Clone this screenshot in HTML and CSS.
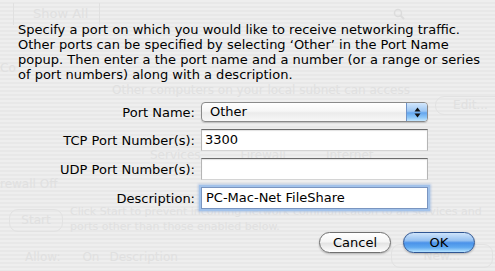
FILE: index.html
```html
<!DOCTYPE html>
<html>
<head>
<meta charset="utf-8">
<link rel="stylesheet" href="styles.css">
</head>
<body>
<div class="screen">
  <div class="ghost" aria-hidden="true">
    <div class="g-toolbar">
      <span class="g-sep"></span>
      <span class="g-showall">Show All</span>
      <span class="g-sep"></span>
      <span class="g-search">
        <svg width="12" height="12" viewBox="0 0 12 12"><circle cx="5" cy="5" r="3.5" fill="none" stroke="#dcdcdc" stroke-width="1.5"/><path d="M7.5 7.5 L11 11" stroke="#dcdcdc" stroke-width="2"/></svg>
      </span>
    </div>
    <div class="g-name">Co</div>
    <div class="g-other">
      <span class="g-other-text">Other computers on your local subnet can access</span>
      <span class="g-btn g-edit">Edit...</span>
    </div>
    <div class="g-tabs"><span>Services</span><span>Firewall</span><span>Internet</span></div>
    <div class="g-off">rewall Off</div>
    <div class="g-start">
      <span class="g-btn g-startbtn">Start</span>
      <span class="g-start-text">Click Start to prevent incoming network communication to all services and<br>ports other than those enabled below.</span>
    </div>
    <div class="g-allow">
      <span class="g-allow-l">Allow:</span>
      <span class="g-on">On</span>
      <span class="g-desc">Description</span>
      <span class="g-btn g-new">New...</span>
    </div>
  </div>

  <div class="sheet">
    <p class="msg"><span>Specify a port on which you would like to receive networking traffic.</span><span>Other ports can be specified by selecting ‘Other’ in the Port Name</span><span>popup. Then enter a the port name and a number (or a range or series</span><span>of port numbers) along with a description.</span></p>

    <div class="form">
      <label class="lbl">Port Name:</label>
      <div class="popup">
        <span class="popup-val">Other</span>
        <span class="popup-arrows">
          <svg width="7" height="11" viewBox="0 0 7 11"><path d="M3.5 0.5 L6.5 4.5 L0.5 4.5 Z" fill="#111"/><path d="M0.5 6.5 L6.5 6.5 L3.5 10.5 Z" fill="#111"/></svg>
        </span>
      </div>

      <label class="lbl">TCP Port Number(s):</label>
      <div class="field">3300</div>

      <label class="lbl">UDP Port Number(s):</label>
      <div class="field"></div>

      <label class="lbl">Description:</label>
      <div class="field focus">PC-Mac-Net FileShare</div>
    </div>

    <div class="buttons">
      <button class="btn cancel">Cancel</button>
      <button class="btn ok">OK</button>
    </div>
  </div>
</div>
</body>
</html>
```

FILE: styles.css
```css
html, body {
  margin: 0;
  padding: 0;
}

.screen {
  width: 495px;
  height: 271px;
  overflow: hidden;
  display: grid;
  grid-template-columns: 495px;
  grid-template-rows: 271px;
  background: repeating-linear-gradient(to bottom, #eeeeee 0 2px, #e8e8e8 2px 4px);
  font-family: "DejaVu Sans", "Lucida Grande", sans-serif;
  font-size: 13px;
  color: #000;
}

.ghost, .sheet {
  grid-area: 1 / 1;
  min-width: 0;
}

/* faint window content showing through the sheet */
.ghost {
  color: #e0e0e0;
  font-size: 12px;
  display: flex;
  flex-direction: column;
  overflow: hidden;
}
.ghost * {
  flex-shrink: 0;
}

.g-toolbar {
  height: 27px;
  display: flex;
  align-items: center;
}
.g-sep {
  width: 1px;
  height: 22px;
  background: #e0e0e0;
  margin-left: 13px;
}
.g-showall {
  margin-left: 19px;
  font-size: 13px;
  width: 52px;
  white-space: nowrap;
}
.g-toolbar .g-sep:nth-child(3) {
  margin-left: 14px;
}
.g-search {
  margin-left: 293px;
  display: flex;
}

.g-name {
  margin-top: 34px;
  height: 15px;
  line-height: 15px;
  margin-left: 0;
  white-space: nowrap;
}

.g-other {
  margin-top: 7px;
  height: 32px;
  display: flex;
  align-items: flex-start;
  white-space: nowrap;
}
.g-other-text {
  margin-left: 112px;
  line-height: 15px;
}
.g-btn {
  border: 1px solid #e2e2e2;
  border-radius: 9px;
  height: 17px;
  line-height: 17px;
  text-align: center;
  white-space: nowrap;
}
.g-edit {
  margin-left: 25px;
  margin-top: 13px;
  width: 69px;
}

.g-tabs {
  margin-top: 33px;
  height: 15px;
  line-height: 15px;
  display: flex;
  gap: 40px;
  margin-left: 150px;
  white-space: nowrap;
}

.g-off {
  margin-top: 14px;
  height: 15px;
  line-height: 15px;
  margin-left: 0;
  white-space: nowrap;
}

.g-start {
  margin-top: 12px;
  height: 38px;
  display: flex;
  align-items: flex-start;
  white-space: nowrap;
}
.g-startbtn {
  margin-left: 9px;
  width: 52px;
  height: 21px;
  line-height: 21px;
  margin-top: 5px;
}
.g-start-text {
  margin-left: 7px;
  font-size: 11px;
  line-height: 15px;
}

.g-allow {
  margin-top: 8px;
  display: flex;
  align-items: flex-start;
  white-space: nowrap;
  line-height: 15px;
}
.g-allow-l { margin-left: 25px; }
.g-on { margin-left: 22px; }
.g-desc { margin-left: 10px; }
.g-new {
  margin-left: 213px;
  width: 100px;
  margin-top: -6px;
  height: 22px;
  line-height: 22px;
}

/* the sheet */
.sheet {
  padding: 22px 20px 0 18px;
  display: flex;
  flex-direction: column;
}

.msg {
  margin: 0;
  font-size: 13px;
  line-height: 15px;
  display: flex;
  flex-direction: column;
  white-space: nowrap;
}

.form {
  margin-top: 20px;
  display: grid;
  grid-template-columns: 177px 227px;
  grid-template-rows: 20px 22px 22px 22px;
  column-gap: 6px;
  row-gap: 7px;
  align-items: center;
}

.lbl {
  text-align: right;
  white-space: nowrap;
}

.popup {
  height: 18px;
  display: flex;
  border: 1px solid #8a8a8a;
  border-radius: 4px;
  background: linear-gradient(to bottom, #ffffff 0%, #f6f6f6 45%, #ebebeb 55%, #f7f7f7 100%);
  box-shadow: 0 1px 1px rgba(0, 0, 0, 0.18);
  overflow: hidden;
}
.popup-val {
  flex: 1;
  padding-left: 8px;
  line-height: 18px;
}
.popup-arrows {
  width: 20px;
  display: flex;
  align-items: center;
  justify-content: center;
  border-left: 1px solid #6f93c8;
  background: linear-gradient(to bottom, #d3e7fc 0%, #9cc6f3 45%, #64a6ee 55%, #8cc6f7 80%, #c5e6fd 100%);
}

.field {
  height: 20px;
  line-height: 20px;
  padding-left: 3px;
  background: #fff;
  border: 1px solid;
  border-color: #6c6c6c #b5b5b5 #d4d4d4 #b5b5b5;
  box-shadow: inset 0 1px 1px rgba(0, 0, 0, 0.12);
  white-space: nowrap;
}
.field.focus {
  padding-left: 4px;
  border-color: #7a95c0;
  box-shadow: 0 0 0 2px #a2c2ea, 0 0 2px 3px rgba(120, 160, 220, 0.45);
}

.buttons {
  margin-top: 23px;
  display: flex;
  justify-content: flex-end;
  gap: 12px;
}

.btn {
  width: 72px;
  height: 21px;
  padding: 0;
  border-radius: 11px;
  font-family: inherit;
  font-size: 13px;
  line-height: 19px;
  color: #000;
  box-shadow: 0 1px 2px rgba(0, 0, 0, 0.25);
}
.cancel {
  border: 1px solid #707070;
  background: linear-gradient(to bottom, #ffffff 0%, #f5f5f5 45%, #e4e4e4 55%, #f2f2f2 80%, #ffffff 100%);
}
.ok {
  border: 1px solid #2f5592;
  background: linear-gradient(to bottom, #cfe4fa 0%, #94c0f1 40%, #4a92e9 52%, #5ea8f0 75%, #b6e3fe 100%);
}
```
